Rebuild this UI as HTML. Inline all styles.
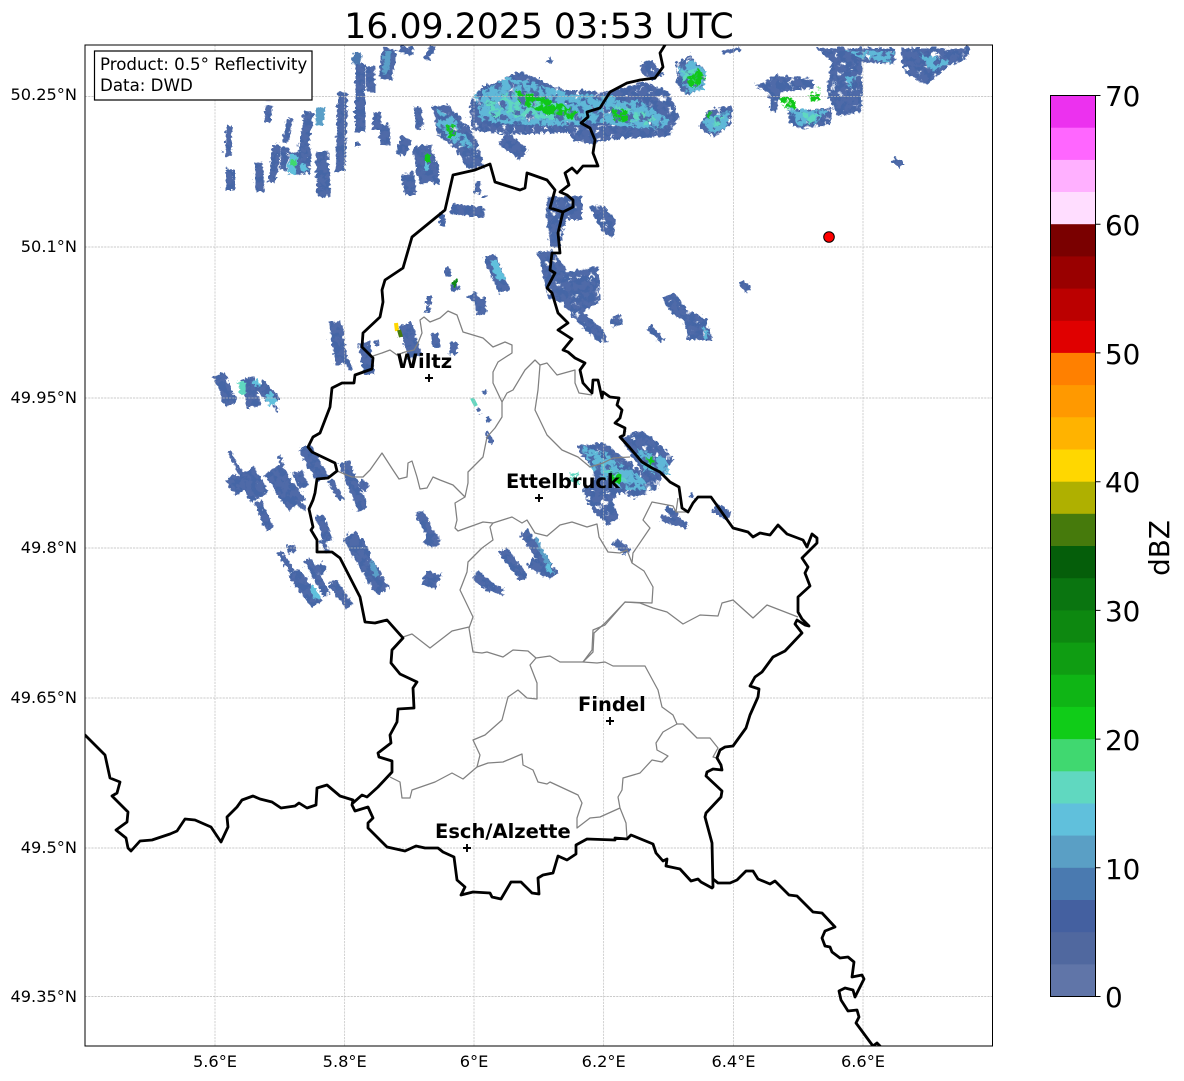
<!DOCTYPE html>
<html><head><meta charset="utf-8"><title>Radar</title>
<style>
html,body{margin:0;padding:0;background:#fff}
svg{display:block}
text{font-family:"DejaVu Sans","Liberation Sans",sans-serif;fill:#000}
.t{font-size:16.2px}
.c{font-size:27.8px}
.l{font-size:19.5px;font-weight:bold}
</style></head><body>
<svg width="1184" height="1081" viewBox="0 0 1184 1081" xmlns="http://www.w3.org/2000/svg">
<defs>
<clipPath id="ax"><rect x="85" y="45" width="907.5" height="1001"/></clipPath>
<filter id="jag" filterUnits="userSpaceOnUse" x="85" y="45" width="908" height="1001" color-interpolation-filters="sRGB"><feTurbulence type="turbulence" baseFrequency="0.2" numOctaves="1" seed="4" result="d"/><feDisplacementMap in="SourceGraphic" in2="d" scale="6" xChannelSelector="R" yChannelSelector="G"/></filter>
<filter id="holes" filterUnits="userSpaceOnUse" x="85" y="45" width="908" height="1001" color-interpolation-filters="sRGB"><feTurbulence type="fractalNoise" baseFrequency="0.14" numOctaves="2" seed="9" result="n"/><feColorMatrix in="n" type="matrix" values="0 0 0 0 0 0 0 0 0 0 0 0 0 0 0 12 0 0 0 -3.4" result="m"/><feComposite in="SourceGraphic" in2="m" operator="in" result="c"/><feTurbulence type="turbulence" baseFrequency="0.2" numOctaves="1" seed="4" result="d"/><feDisplacementMap in="c" in2="d" scale="6" xChannelSelector="R" yChannelSelector="G"/></filter>
<filter id="spk" filterUnits="userSpaceOnUse" x="85" y="45" width="908" height="1001" color-interpolation-filters="sRGB"><feTurbulence type="fractalNoise" baseFrequency="0.16" numOctaves="2" seed="7" result="n"/><feColorMatrix in="n" type="matrix" values="0 0 0 0 0 0 0 0 0 0 0 0 0 0 0 12 0 0 0 -5.8" result="m"/><feComposite in="SourceGraphic" in2="m" operator="in" result="c"/><feTurbulence type="turbulence" baseFrequency="0.2" numOctaves="1" seed="4" result="d"/><feDisplacementMap in="c" in2="d" scale="6" xChannelSelector="R" yChannelSelector="G"/></filter>
<filter id="gsp" filterUnits="userSpaceOnUse" x="85" y="45" width="908" height="1001" color-interpolation-filters="sRGB"><feTurbulence type="fractalNoise" baseFrequency="0.16" numOctaves="2" seed="12" result="n"/><feColorMatrix in="n" type="matrix" values="0 0 0 0 0 0 0 0 0 0 0 0 0 0 0 12 0 0 0 -4.7" result="m"/><feComposite in="SourceGraphic" in2="m" operator="in" result="c"/><feTurbulence type="turbulence" baseFrequency="0.2" numOctaves="1" seed="4" result="d"/><feDisplacementMap in="c" in2="d" scale="6" xChannelSelector="R" yChannelSelector="G"/></filter>
<g id="st" fill="none" stroke-linecap="butt">
<path d="M267 103L265 120" stroke-width="7"/>
<path d="M227 124L226 155" stroke-width="6"/>
<path d="M228 167L228 188" stroke-width="9"/>
<path d="M256 160L258 190" stroke-width="8"/>
<path d="M288 117L283 140" stroke-width="6"/>
<path d="M275 143L270 180" stroke-width="8"/>
<path d="M283 145L281 168" stroke-width="8"/>
<path d="M304 145L303 172" stroke-width="10"/>
<path d="M293 150L292 172" stroke-width="12"/>
<path d="M307 110L301 150" stroke-width="10"/>
<path d="M320 150L322 195" stroke-width="13"/>
<path d="M341 90L338 170" stroke-width="10"/>
<path d="M358 62L358 130" stroke-width="10"/>
<path d="M368 64L369 90" stroke-width="9"/>
<path d="M388 47L383 77" stroke-width="14"/>
<path d="M405 45L403 52" stroke-width="14"/>
<path d="M430 45L425 58" stroke-width="6"/>
<path d="M375 110L375 127" stroke-width="8"/>
<path d="M382 123L383 143" stroke-width="10"/>
<path d="M405 136L398 153" stroke-width="11"/>
<path d="M415 105L418 127" stroke-width="8"/>
<path d="M420 144L427 180" stroke-width="20"/>
<path d="M405 172L409 193" stroke-width="12"/>
<path d="M433 160L434 182" stroke-width="6"/>
<path d="M355 140L355 145" stroke-width="6"/>
<path d="M476 180L475 192" stroke-width="6"/>
<path d="M483 193L483 195" stroke-width="6"/>
<path d="M500 136L522 152" stroke-width="14"/>
<path d="M449 206L482 211" stroke-width="10"/>
<path d="M441 212L440 224" stroke-width="5"/>
<path d="M445 265L446 275" stroke-width="6"/>
<path d="M451 281L454 288" stroke-width="8"/>
<path d="M469 292L476 300" stroke-width="8"/>
<path d="M479 296L481 312" stroke-width="8"/>
<path d="M427 295L427 302" stroke-width="5"/>
<path d="M488 254L502 290" stroke-width="12"/>
<path d="M333 320L340 362" stroke-width="13"/>
<path d="M346 358L348 368" stroke-width="4"/>
<path d="M362 340L367 372" stroke-width="11"/>
<path d="M374 338L375 344" stroke-width="4"/>
<path d="M403 322L413 355" stroke-width="14"/>
<path d="M432 331L434 345" stroke-width="8"/>
<path d="M452 340L451 353" stroke-width="8"/>
<path d="M426 303L426 310" stroke-width="5"/>
<path d="M477 300L479 312" stroke-width="8"/>
<path d="M217 372L229 402" stroke-width="12"/>
<path d="M245 376L252 405" stroke-width="14"/>
<path d="M258 382L273 400" stroke-width="12"/>
<path d="M273 403L276 410" stroke-width="3"/>
<path d="M227 449L243 480" stroke-width="4"/>
<path d="M228 475L238 490" stroke-width="12"/>
<path d="M243 470L258 495" stroke-width="20"/>
<path d="M255 500L268 527" stroke-width="8"/>
<path d="M270 467L295 503" stroke-width="20"/>
<path d="M278 453L281 465" stroke-width="3"/>
<path d="M296 500L304 507" stroke-width="4"/>
<path d="M295 470L302 485" stroke-width="10"/>
<path d="M302 445L321 477" stroke-width="13"/>
<path d="M328 478L340 498" stroke-width="6"/>
<path d="M342 460L361 507" stroke-width="11"/>
<path d="M358 480L365 487" stroke-width="8"/>
<path d="M317 514L327 540" stroke-width="9"/>
<path d="M319 538L326 550" stroke-width="4"/>
<path d="M277 550L290 570" stroke-width="6"/>
<path d="M288 543L290 551" stroke-width="8"/>
<path d="M291 570L315 602" stroke-width="13"/>
<path d="M305 557L325 593" stroke-width="7"/>
<path d="M316 563L322 570" stroke-width="9"/>
<path d="M330 580L347 604" stroke-width="9"/>
<path d="M347 533L381 590" stroke-width="15"/>
<path d="M358 537L370 565" stroke-width="6"/>
<path d="M417 510L435 543" stroke-width="9"/>
<path d="M424 535L434 540" stroke-width="13"/>
<path d="M422 575L437 580" stroke-width="15"/>
<path d="M473 573L490 586" stroke-width="10"/>
<path d="M490 585L502 591" stroke-width="6"/>
<path d="M501 548L522 577" stroke-width="10"/>
<path d="M522 530L552 574" stroke-width="10"/>
<path d="M528 560L548 572" stroke-width="10"/>
<path d="M482 388L484 392" stroke-width="4"/>
<path d="M475 406L478 411" stroke-width="4"/>
<path d="M485 415L488 420" stroke-width="4"/>
<path d="M484 431L491 441" stroke-width="4"/>
<path d="M612 539L626 550" stroke-width="8"/>
<path d="M660 516L685 523" stroke-width="7"/>
<path d="M664 505L684 525" stroke-width="6"/>
<path d="M713 505L727 515" stroke-width="9"/>
<path d="M688 493L692 495" stroke-width="3"/>
<path d="M647 325L661 339" stroke-width="6"/>
<path d="M739 280L747 288" stroke-width="7"/>
<path d="M892 157L900 164" stroke-width="6"/>
<path d="M547 60L549 57" stroke-width="4"/>
<path d="M720 50L738 47" stroke-width="4"/>
</g>
<g id="cl">
<path d="M430 104L446 103L466 124L476 142L482 166L464 166L454 146L436 134Z"/>
<path d="M468 100L480 85L500 78L516 70L530 74L560 88L574 88L602 90L643 80L667 90L677 115L667 134L627 136L605 138L590 142L573 140L566 130L530 132L500 132L470 128Z"/>
<path d="M673 62L688 54L703 68L702 84L685 94L676 85Z"/>
<path d="M638 62L650 58L662 73L650 78L640 72Z"/>
<path d="M696 125L706 108L730 104L729 122L712 135Z"/>
<path d="M752 84L775 73L812 78L812 86L778 90L774 110L768 110L768 92Z"/>
<path d="M786 108L830 106L828 122L800 127L788 122Z"/>
<path d="M813 46L892 46L894 62L860 60L860 110L835 114L824 88L830 60Z"/>
<path d="M898 46L968 46L965 56L945 65L925 82L903 72Z"/>
<path d="M545 195L580 194L580 218L564 218L558 246L548 244L544 212Z"/>
<path d="M587 204L600 203L613 217L611 237L600 230Z"/>
<path d="M536 250L550 248L566 270L596 264L598 300L580 310L600 326L606 340L595 340L572 316L560 300L545 296Z"/>
<path d="M607 318L618 312L620 322L610 326Z"/>
<path d="M660 295L672 290L686 308L705 318L710 338L686 338L682 320L664 305Z"/>
<path d="M577 443L603 441L640 470L662 472L655 487L632 497L620 490L610 497L618 518L605 523L588 505L580 488L590 480L592 468L577 450Z"/>
<path d="M618 436L640 428L672 456L660 476L640 470Z"/>
</g>
</defs>
<rect width="1184" height="1081" fill="#fff"/>
<g clip-path="url(#ax)">
<path d="M271 84L268 102" stroke="#e8e8f4" stroke-width="5" fill="none"/>
<use href="#st" stroke="#4f6aa8" filter="url(#jag)"/>
<use href="#st" stroke="#4566a6" filter="url(#spk)"/>
<g fill="none" stroke-linecap="butt" filter="url(#jag)">
<path d="M319 105L317 123" stroke="#5a9fc8" stroke-width="8"/>
<path d="M356 50L354 62" stroke="#4a78b0" stroke-width="8"/>
<path d="M292 152L289 172" stroke="#60c0dc" stroke-width="8"/>
<path d="M300 162L304 170" stroke="#60c0dc" stroke-width="6"/>
<path d="M291 158L291 165" stroke="#40d870" stroke-width="6"/>
<path d="M386 50L383 72" stroke="#5a9fc8" stroke-width="6"/>
<path d="M240 380L242 392" stroke="#60d8c0" stroke-width="7"/>
<path d="M266 392L272 402" stroke="#60c0dc" stroke-width="9"/>
<path d="M253 378L256 384" stroke="#60c0dc" stroke-width="5"/>
<path d="M425 152L425 160" stroke="#10c818" stroke-width="6"/>
<path d="M425 160L424 168" stroke="#60c0dc" stroke-width="4"/>
<path d="M453 278L453 285" stroke="#108a18" stroke-width="4"/>
<path d="M310 585L316 597" stroke="#60c0dc" stroke-width="6"/>
<path d="M369 560L375 575" stroke="#5a9fc8" stroke-width="5"/>
<path d="M491 258L500 278" stroke="#60c0dc" stroke-width="7"/>
<path d="M534 537L548 565" stroke="#5a9fc8" stroke-width="4"/>
<path d="M546 562L551 572" stroke="#60c0dc" stroke-width="5"/>
</g>
<path d="M396 323L397 331" stroke="#ffd700" stroke-width="4" fill="none"/>
<path d="M399 330L401 337" stroke="#467a0c" stroke-width="4" fill="none"/>
<path d="M472 398L476 406" stroke="#60d8c0" stroke-width="4" fill="none"/>
<use href="#cl" fill="#4f6aa8" filter="url(#holes)"/>
<use href="#cl" fill="#4566a6" filter="url(#spk)"/>
<g fill="#5fb8d8" filter="url(#gsp)">
<path d="M472 92L505 76L530 80L570 92L610 94L640 100L668 118L660 128L620 124L600 120L560 124L520 122L480 120Z"/>
<path d="M676 66L692 58L704 70L702 88L684 92Z"/>
<path d="M700 118L728 108L724 126L708 132Z"/>
<path d="M785 106L826 108L812 122L796 124Z"/>
<path d="M434 106L452 116L472 146L452 142L436 124Z"/>
<path d="M580 444L606 452L640 476L650 488L622 488L590 470Z"/>
<path d="M632 446L664 456L668 472L644 472Z"/>
<path d="M916 50L948 60L930 70Z"/>
<path d="M840 48L892 50L892 62L860 56Z"/>
<path d="M842 74L856 74L850 88Z"/>
<path d="M700 322L710 332L702 338Z"/>
</g>
<g fill="#60d8c0" filter="url(#spk)">
<path d="M480 100L512 90L566 104L572 118L520 116L488 116Z"/>
<path d="M610 100L652 114L658 126L628 120Z"/>
<path d="M678 70L694 66L694 86L682 86Z"/>
<path d="M704 116L722 114L716 128Z"/>
<path d="M566 472L576 470L578 482L568 482Z"/>
<path d="M596 458L626 478L612 484Z"/>
<path d="M792 108L820 114L806 122Z"/>
</g>
<g fill="#10c818" filter="url(#gsp)">
<path d="M514 88L530 92L555 100L576 110L570 117L545 112L516 100Z"/>
<path d="M608 106L624 108L628 120L612 119Z"/>
<path d="M444 124L454 122L454 136L448 136Z"/>
<path d="M684 80L696 66L704 76L690 88Z"/>
<path d="M776 94L792 96L794 107L782 106Z"/>
<path d="M806 94L818 86L818 98L808 99Z"/>
<path d="M704 112L711 110L708 117Z"/>
<path d="M607 469L621 472L619 482L610 480Z"/>
<path d="M643 456L653 457L650 465Z"/>
</g>
<g stroke="#bbb" stroke-width="0.65" stroke-dasharray="2.2 1" fill="none">
<path d="M215 45V1046M344.7 45V1046M474 45V1046M603.7 45V1046M733.5 45V1046M863 45V1046"/>
<path d="M85 96.5H992M85 247H992M85 398H992M85 548H992M85 698H992M85 848H992M85 996.5H992"/>
</g>
<g fill="none" stroke="#808080" stroke-width="1.25" stroke-linejoin="round">
<path d="M373 356L382 353L390 350L397 355L405 352L414 350L418 343L422 333L420 320L424 317L430 322L440 318L448 311L457 315L463 332L483 338L493 347L505 342L512 345L512 353L498 362L493 372L493 383L502 402L502 417L495 428L487 437L483 457L468 472L468 483L465 497L455 503L457 520L455 528L458 531L483 522L493 523L512 517L522 523L527 520L535 533L547 536L560 525L572 522L587 527L597 524L599 537L608 552L620 553L627 550L632 563L644 571L653 587L652 603L625 602L605 623L594 633L593 652L583 662"/>
<path d="M337 471L352 477L363 477L370 470L382 453L393 470L399 479L407 477L408 463L412 461L417 477L420 489L427 488L433 477L440 480L453 485L465 497"/>
<path d="M502 402L507 393L513 390L525 370L535 360L540 365L547 363L557 375L575 370L575 383L579 393L592 395"/>
<path d="M540 365L538 390L535 410L547 435L562 450L578 457L590 467L603 463L613 458L630 457"/>
<path d="M632 563L633 553L650 528L643 520L652 502L673 506L676 512L688 512M678 498L676 512"/>
<path d="M493 523L490 527L493 540L482 548L468 562L467 572L462 585L460 590L473 617L469 628L473 652L482 653L487 652L503 657L513 650L528 651L536 658"/>
<path d="M403 637L412 634L430 648L452 631L469 627"/>
<path d="M536 658L550 656L560 662L583 662L597 663L605 662L613 666L645 666L658 690L662 707L673 715L677 724L683 724L697 738L710 738L718 748L713 757L717 758"/>
<path d="M677 724L663 732L656 743L657 750L668 756L662 762L652 760L640 773L623 778L622 790L618 797L620 808L626 823L627 838"/>
<path d="M620 808L600 817L590 818L577 828L577 818L582 803L578 795L550 782L547 784L538 782L533 770L523 765L522 754L503 762L488 763L477 767L463 779L452 773L435 782L412 790L410 798L402 798L400 782L390 777"/>
<path d="M477 767L480 755L473 740L485 735L502 720L508 697L518 690L527 698L537 699L537 683L530 665L536 658"/>
<path d="M583 662L592 650L593 630L605 625L625 602L640 603L653 608L667 612L683 624L700 615L718 616L722 603L733 600L753 618L767 605L798 617"/>
</g>
<g fill="none" stroke="#000" stroke-width="2.8" stroke-linejoin="round" stroke-linecap="round">
<path d="M85 735L105 755L110 778L120 782L117 793L112 796L128 812L127 822L116 830L126 838L128 848L131 851L140 841L152 840L170 834L177 831L185 819L195 820L211 827L221 842L228 827L227 817L237 807L242 800L253 796L260 799L272 802L281 808L295 806L299 803L307 808L316 805L317 788L327 785L340 796L353 800L352 805L355 811L368 807L373 818L368 823L368 828L387 847L405 851L416 846L425 848L438 848L443 852L454 857L457 880L465 887L461 895L473 892L490 893L492 897L501 899L511 882L521 882L532 893L539 894L538 878L543 875L553 873L558 856L567 860L576 854L576 845L587 839L615 840L615 838L627 839L631 835L653 844L656 853L663 861L667 859L666 866L680 869L691 881L698 879L701 882L712 888L713 887L712 843L705 817L706 813L721 797L722 791L706 776L707 772L713 769L722 770L721 765L717 758L720 750L725 747L733 746L746 728L750 715L758 697L759 689L750 686L755 677L762 672L773 657L785 651L802 633L795 624L797 620L805 625L809 626L802 619L798 612L798 597L810 586L805 573L808 567L802 558L817 543L817 538L812 534L807 547L803 540L787 534L778 525L770 535L760 533L753 537L748 532L733 528L711 497L698 497L693 503L688 512L682 508L679 487L670 482L660 472L652 468L642 462L630 448L620 437L624 435L625 428L615 423L620 418L622 410L617 405L619 398L610 397L603 392L602 398L598 380L593 380L592 393L583 383L580 370L585 363L575 358L568 352L563 350L572 339L558 330L568 323L558 313L552 293L547 288L555 273L550 270L552 253L560 253L558 233L563 212L550 208L555 190L547 180L530 174L527 173L525 188L520 190L495 182L490 164L475 170L453 175L445 210L412 237L403 268L385 280L382 290L383 302L380 317L363 333L362 347L373 358L372 369L355 375L354 383L342 383L332 388L330 407L320 433L313 437L308 447L312 452L335 463L337 471L328 478L317 479L315 493L313 500L309 509L313 527L311 530L317 540L317 552L332 552L340 558L360 597L365 622L375 623L387 620L403 638L392 650L391 663L400 674L417 682L413 688L414 708L398 709L397 722L390 735L391 743L378 753L379 757L392 761L392 772L378 787L367 797L362 795L353 803"/>
<path d="M563 212L573 207L573 200L567 195L560 192L569 185L565 173L572 168L577 173L583 166L598 166L593 153L595 140L590 128L581 123L588 117L587 112L600 108L610 92L627 83L640 80L655 78L663 67L660 53L665 45"/>
<path d="M713 879L718 883L730 883L737 880L746 871L753 871L758 879L770 884L775 881L789 895L797 896L813 912L822 913L835 927L825 931L822 938L825 946L830 947L832 952L840 958L848 957L854 962L852 977L862 975L864 979L855 997L853 990L845 988L839 991L841 1000L848 1011L857 1010L859 1017L856 1023L870 1042L873 1046L877 1043L880 1046"/>
</g>
<circle cx="829" cy="237" r="5.3" fill="#f00" stroke="#000" stroke-width="1"/>
<g stroke="#000" stroke-width="1.9" fill="none">
<path d="M425 378H433M429 374V382"/>
<path d="M535 498H543M539 494V502"/>
<path d="M606 721H614M610 717V725"/>
<path d="M463 848H471M467 844V852"/>
</g>
<text class="l" x="396.5" y="368">Wiltz</text>
<text class="l" x="506" y="488">Ettelbruck</text>
<text class="l" x="578" y="711">Findel</text>
<text class="l" x="435" y="838">Esch/Alzette</text>
</g>
<rect x="85" y="45" width="907.5" height="1001" fill="none" stroke="#000" stroke-width="1"/>
<rect x="94.5" y="51" width="217.5" height="49" fill="#fff" stroke="#000" stroke-width="1.2"/>
<text x="100" y="70" style="font-size:16.67px">Product: 0.5° Reflectivity</text>
<text x="100" y="91" style="font-size:16.67px">Data: DWD</text>
<text x="539" y="38" text-anchor="middle" style="font-size:34.7px">16.09.2025 03:53 UTC</text>
<g class="t" text-anchor="end">
<text x="77" y="100">50.25°N</text>
<text x="77" y="252">50.1°N</text>
<text x="77" y="403">49.95°N</text>
<text x="77" y="553">49.8°N</text>
<text x="77" y="703">49.65°N</text>
<text x="77" y="853">49.5°N</text>
<text x="77" y="1002">49.35°N</text>
</g>
<g class="t" text-anchor="middle">
<text x="215" y="1067">5.6°E</text>
<text x="344.7" y="1067">5.8°E</text>
<text x="474" y="1067">6°E</text>
<text x="603.7" y="1067">6.2°E</text>
<text x="733.5" y="1067">6.4°E</text>
<text x="863" y="1067">6.6°E</text>
</g>
<g>
<rect x="1050.5" y="95.5" width="45" height="32.6" fill="#ec31ef"/>
<rect x="1050.5" y="127.7" width="45" height="32.6" fill="#ff66ff"/>
<rect x="1050.5" y="159.9" width="45" height="32.6" fill="#ffb0ff"/>
<rect x="1050.5" y="192" width="45" height="32.6" fill="#ffddff"/>
<rect x="1050.5" y="224.2" width="45" height="32.6" fill="#7a0000"/>
<rect x="1050.5" y="256.4" width="45" height="32.6" fill="#990000"/>
<rect x="1050.5" y="288.6" width="45" height="32.6" fill="#bb0000"/>
<rect x="1050.5" y="320.8" width="45" height="32.6" fill="#e00000"/>
<rect x="1050.5" y="352.9" width="45" height="32.6" fill="#ff8000"/>
<rect x="1050.5" y="385.1" width="45" height="32.6" fill="#ff9900"/>
<rect x="1050.5" y="417.3" width="45" height="32.6" fill="#ffb300"/>
<rect x="1050.5" y="449.5" width="45" height="32.6" fill="#ffd700"/>
<rect x="1050.5" y="481.7" width="45" height="32.6" fill="#afb000"/>
<rect x="1050.5" y="513.8" width="45" height="32.6" fill="#467a0c"/>
<rect x="1050.5" y="546" width="45" height="32.6" fill="#055e0a"/>
<rect x="1050.5" y="578.2" width="45" height="32.6" fill="#0a7510"/>
<rect x="1050.5" y="610.4" width="45" height="32.6" fill="#0d8810"/>
<rect x="1050.5" y="642.6" width="45" height="32.6" fill="#0f9d12"/>
<rect x="1050.5" y="674.7" width="45" height="32.6" fill="#0fb515"/>
<rect x="1050.5" y="706.9" width="45" height="32.6" fill="#10cc18"/>
<rect x="1050.5" y="739.1" width="45" height="32.6" fill="#40d870"/>
<rect x="1050.5" y="771.3" width="45" height="32.6" fill="#60d8c0"/>
<rect x="1050.5" y="803.5" width="45" height="32.6" fill="#60c0dc"/>
<rect x="1050.5" y="835.6" width="45" height="32.6" fill="#5a9fc5"/>
<rect x="1050.5" y="867.8" width="45" height="32.6" fill="#4a7ab0"/>
<rect x="1050.5" y="900" width="45" height="32.6" fill="#4460a0"/>
<rect x="1050.5" y="932.2" width="45" height="32.6" fill="#50689f"/>
<rect x="1050.5" y="964.4" width="45" height="32.1" fill="#6075a8"/>
<rect x="1050.5" y="95.5" width="45" height="901" fill="none" stroke="#000" stroke-width="1"/>
<path d="M1095.5 95.5h5M1095.5 224.2h5M1095.5 352.9h5M1095.5 481.7h5M1095.5 610.4h5M1095.5 739.1h5M1095.5 867.8h5M1095.5 996.5h5" stroke="#000" stroke-width="1" fill="none"/>
</g>
<g class="c">
<text x="1105" y="106">70</text>
<text x="1105" y="235">60</text>
<text x="1105" y="364">50</text>
<text x="1105" y="492">40</text>
<text x="1105" y="621">30</text>
<text x="1105" y="750">20</text>
<text x="1105" y="879">10</text>
<text x="1105" y="1007">0</text>
</g>
<text class="c" transform="translate(1169 548) rotate(-90)" text-anchor="middle">dBZ</text>
</svg>
</body></html>
